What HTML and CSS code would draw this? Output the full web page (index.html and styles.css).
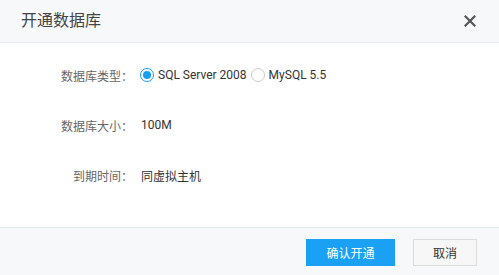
FILE: index.html
```html
<!DOCTYPE html>
<html lang="zh">
<head>
<meta charset="utf-8">
<title>开通数据库</title>
<link rel="stylesheet" href="styles.css">
</head>
<body>
<div class="dialog">
  <div class="header">
    <span class="title">开通数据库</span>
    <svg class="close" width="12" height="12" viewBox="0 0 12 12"><path d="M1.5 1.5L10.5 10.5M10.5 1.5L1.5 10.5" stroke="#555" stroke-width="2.2" stroke-linecap="square"/></svg>
  </div>
  <div class="body">
    <div class="row">
      <span class="label">数据库类型：</span>
      <div class="value radios">
        <span class="radio checked"></span><span class="opt">SQL Server 2008</span>
        <span class="radio"></span><span class="opt">MySQL 5.5</span>
      </div>
    </div>
    <div class="row">
      <span class="label">数据库大小：</span>
      <span class="value">100M</span>
    </div>
    <div class="row">
      <span class="label">到期时间：</span>
      <span class="value">同虚拟主机</span>
    </div>
  </div>
  <div class="footer">
    <button class="btn primary">确认开通</button>
    <button class="btn">取消</button>
  </div>
</div>
</body>
</html>
```
FILE: styles.css
```css
html, body {
  margin: 0;
  padding: 0;
  background: #fff;
}
body {
  font-family: Roboto, "Noto Sans CJK SC", "Noto Sans", sans-serif;
  font-size: 12px;
  color: #333;
}
.dialog {
  width: 499px;
  height: 275px;
  display: flex;
  flex-direction: column;
}
.header {
  height: 42px;
  flex: none;
  background: #f7f8fa;
  border-bottom: 1px solid #e9edf0;
  display: flex;
  align-items: center;
  justify-content: space-between;
  padding: 0 23px 0 21px;
}
.title {
  font-size: 16px;
  color: #444;
  line-height: 20px;
}
.close {
  display: block;
}
.body {
  flex: 1;
  padding-top: 22px;
  display: flex;
  flex-direction: column;
  gap: 30px;
}
.row {
  height: 20px;
  display: flex;
  align-items: center;
}
.label {
  width: 133px;
  text-align: right;
  color: #666;
}
.value {
  margin-left: 8px;
  color: #333;
}
.radios {
  margin-left: 7px;
  display: flex;
  align-items: center;
}
.radio {
  width: 14px;
  height: 14px;
  box-sizing: border-box;
  border: 1px solid #ccc;
  border-radius: 50%;
  background: #fff;
  display: flex;
  align-items: center;
  justify-content: center;
  margin-right: 4px;
}
.radio.checked {
  border-color: #1a9ff0;
}
.radio.checked::after {
  content: "";
  width: 8px;
  height: 8px;
  border-radius: 50%;
  background: #1a9ff0;
}
.opt {
  margin-right: 4px;
  color: #333;
}
.footer {
  height: 48px;
  flex: none;
  background: #f7f8fa;
  border-top: 1px solid #e6ebee;
  display: flex;
  justify-content: flex-end;
  align-items: flex-start;
  padding: 11px 22px 0 0;
  gap: 18px;
  box-sizing: border-box;
}
.btn {
  height: 27px;
  width: 64px;
  font-family: inherit;
  font-size: 12px;
  color: #333;
  background: #f7f7f7;
  border: 1px solid #dcdcdc;
  padding: 0;
  cursor: pointer;
}
.btn.primary {
  width: 89px;
  background: #1aa1f3;
  border-color: #1aa1f3;
  color: #fff;
}
```
